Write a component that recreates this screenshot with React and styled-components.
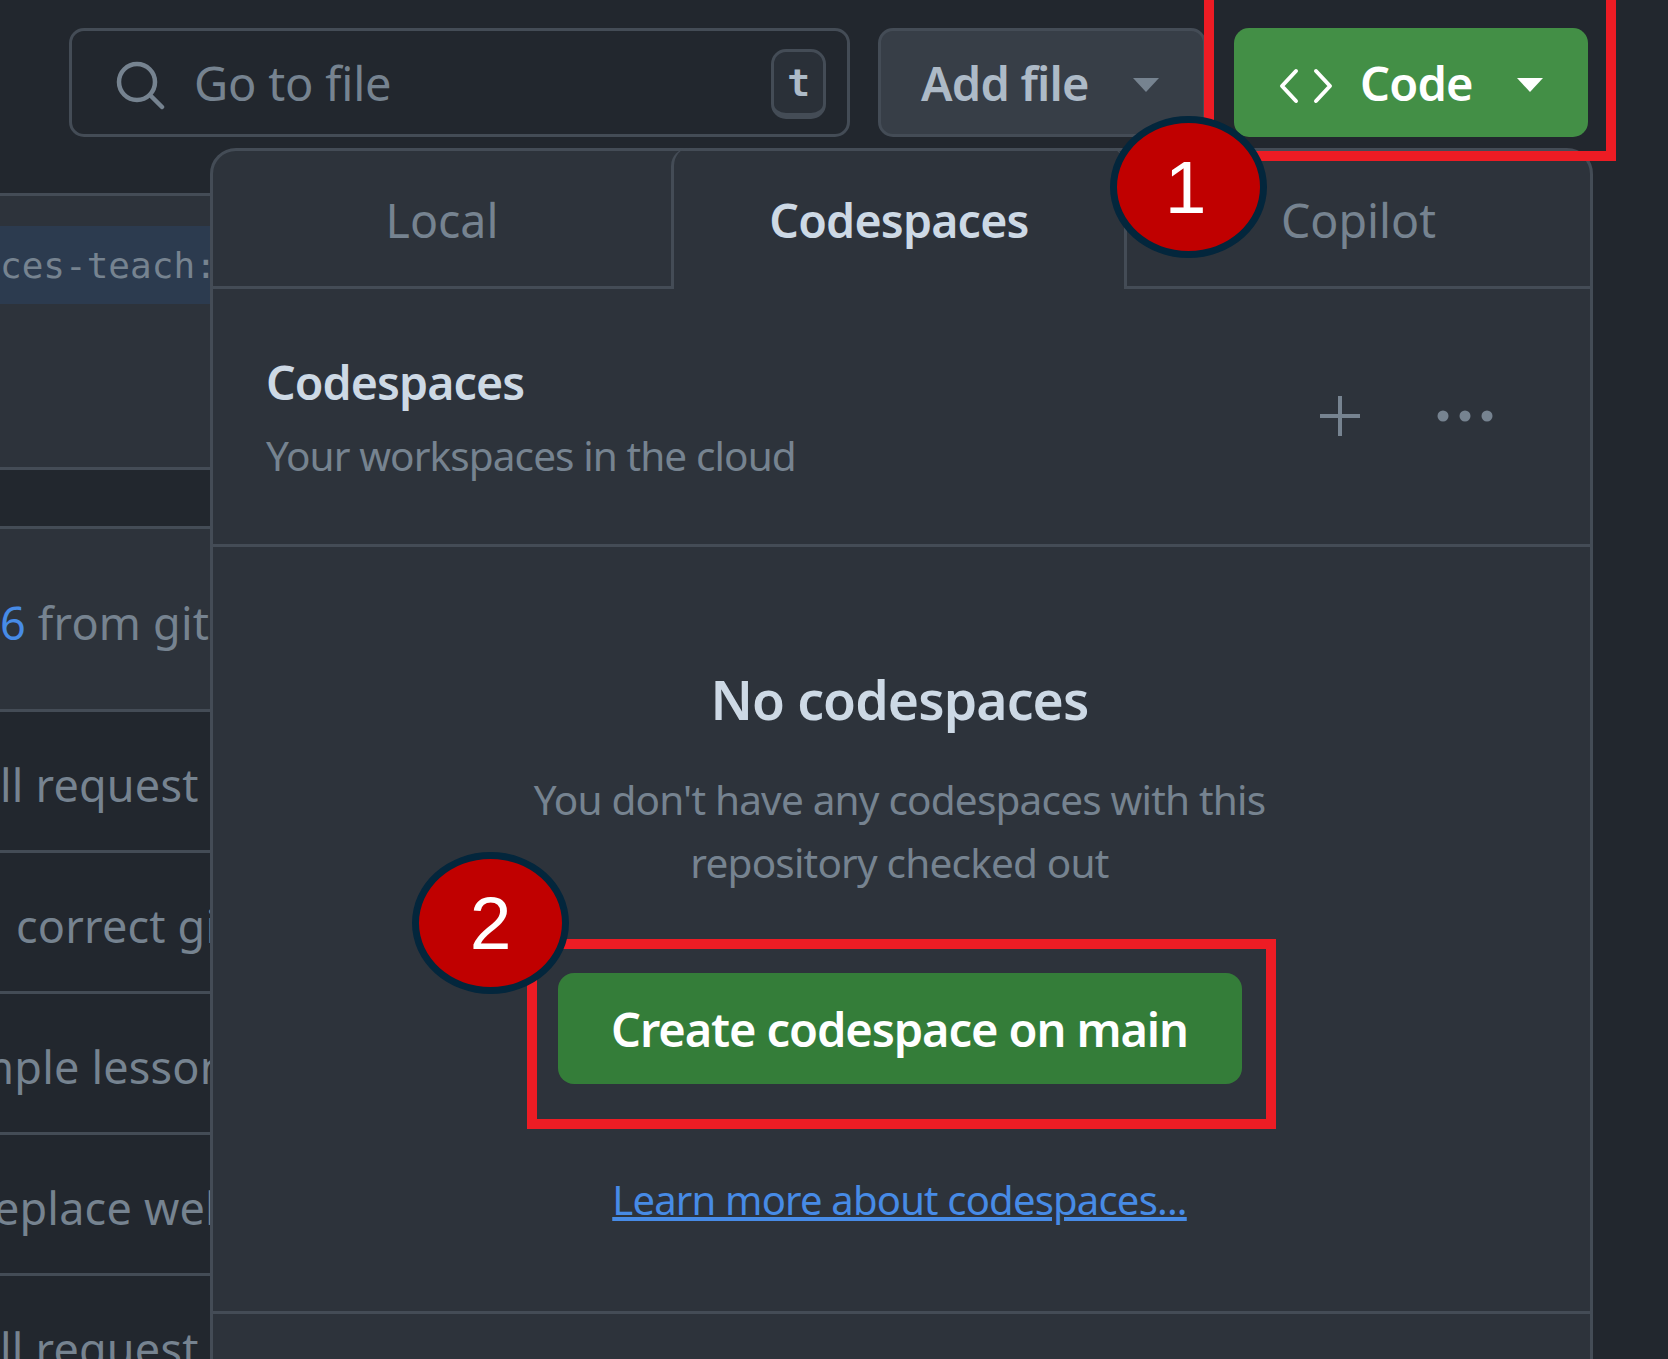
import React from 'react';
import styled, { createGlobalStyle } from 'styled-components';

const sans = `'Noto Sans', 'Open Sans', sans-serif`;
const mono = `'DejaVu Sans Mono', 'Liberation Mono', monospace`;
const line = '#444c56';

const GlobalStyle = createGlobalStyle`
	html, body {
		margin: 0;
		padding: 0;
		background: #22272e;
	}
`;

const Page = styled.div`
	position: relative;
	width: 1668px;
	height: 1359px;
	overflow: hidden;
	background: #22272e;
	font-family: ${sans};
`;

const Toolbar = styled.div`
	display: flex;
	height: 109px;
	padding: 28px 0 0 69px;
	gap: 28px;
`;

const SearchBox = styled.div`
	display: flex;
	align-items: center;
	box-sizing: border-box;
	width: 781px;
	padding: 0 21px 0 44px;
	gap: 29px;
	border: 3px solid ${line};
	border-radius: 15px;
	font-size: 47px;
	letter-spacing: -0.2px;
	color: #768390;
`;

const SearchIcon = styled.svg`
	width: 49px;
	height: 49px;
	margin-top: 5px;
	fill: none;
	stroke: #768390;
	stroke-width: 4.5;
	stroke-linecap: round;
`;

const SearchText = styled.span`
	flex: 1;
`;

const KeyHint = styled.span`
	display: flex;
	align-items: center;
	justify-content: center;
	box-sizing: border-box;
	width: 55px;
	height: 70px;
	margin-top: 3px;
	border: 3px solid ${line};
	border-bottom-width: 6px;
	border-radius: 15px;
	background: #2a3038;
	color: #adbac7;
	font-family: ${mono};
	font-size: 38px;
	font-weight: 700;
`;

const ActionButton = styled.div`
	display: flex;
	align-items: center;
	box-sizing: border-box;
	width: ${(props) => props.$width}px;
	padding-left: ${(props) => props.$pad}px;
	border-radius: 15px;
	background: ${(props) => (props.$primary ? '#438f46' : '#373e47')};
	border: ${(props) => (props.$primary ? 'none' : `3px solid ${line}`)};
	color: ${(props) => (props.$primary ? '#ffffff' : '#adbac7')};
	font-size: 47px;
	font-weight: 600;
	letter-spacing: -0.8px;
`;

const Caret = styled.span`
	width: 0;
	height: 0;
	margin: 4px 0 0 ${(props) => props.$gap}px;
	border-left: 13px solid transparent;
	border-right: 13px solid transparent;
	border-top: 14px solid ${(props) => props.$color};
`;

const CodeIcon = styled.svg`
	width: 54px;
	height: 36px;
	margin: 6px 27px 0 0;
	fill: none;
	stroke: #ffffff;
	stroke-width: 4;
	stroke-linecap: round;
	stroke-linejoin: round;
`;

const FileList = styled.div`
	width: 1400px;
	margin-top: 56px;
	border-top: 3px solid ${line};
`;

const FileRow = styled.div`
	box-sizing: border-box;
	display: flex;
	align-items: ${(props) => (props.$band ? 'flex-start' : 'center')};
	height: ${(props) => props.$height}px;
	padding-top: ${(props) => (props.$band ? 0 : 6)}px;
	border-bottom: 3px solid ${line};
	background: ${(props) => (props.$light ? '#2d333b' : '#22272e')};
	color: #768390;
	font-size: 45px;
	letter-spacing: 0.2px;
	white-space: nowrap;
`;

const RowText = styled.span`
	margin-left: ${(props) => props.$x}px;
`;

const CodeBand = styled.div`
	flex: 1;
	display: flex;
	align-items: center;
	height: 78px;
	margin-top: 30px;
	background: #2c3b4f;
	font-family: ${mono};
	font-size: 36px;
	letter-spacing: 0;
	color: #768390;
`;

const IssueLink = styled.span`
	color: #478be6;
`;

const Panel = styled.div`
	position: absolute;
	left: 210px;
	top: 148px;
	box-sizing: border-box;
	width: 1383px;
	height: 1300px;
	border: 3px solid ${line};
	border-radius: 26px 26px 0 0;
	background: #2d333b;
	z-index: 2;
`;

const Tabs = styled.div`
	display: grid;
	grid-template-columns: 458px 456px 1fr;
	height: 138px;
`;

const Tab = styled.div`
	display: flex;
	align-items: center;
	justify-content: center;
	box-sizing: border-box;
	padding-top: 3px;
	font-size: 46.5px;
	letter-spacing: ${(props) => (props.$active ? '-0.8px' : '0')};
	font-weight: ${(props) => (props.$active ? 600 : 400)};
	color: ${(props) => (props.$active ? '#cdd9e5' : '#768390')};
	border-bottom: ${(props) => (props.$active ? 'none' : `3px solid ${line}`)};
	border-left: ${(props) => (props.$active ? `3px solid ${line}` : 'none')};
	border-right: ${(props) => (props.$active ? `3px solid ${line}` : 'none')};
	border-radius: ${(props) => (props.$active ? '18px 18px 0 0' : '0')};
	margin-top: ${(props) => (props.$active ? '-3px' : '0')};
`;

const PanelHeader = styled.div`
	display: flex;
	align-items: center;
	justify-content: space-between;
	box-sizing: border-box;
	height: 258px;
	padding: 0 97px 0 53px;
	border-bottom: 3px solid ${line};
`;

const Title = styled.div`
	font-size: 46.5px;
	font-weight: 600;
	letter-spacing: -0.9px;
	line-height: 60px;
	color: #cdd9e5;
`;

const Subtitle = styled.div`
	margin-top: 19px;
	font-size: 40.5px;
	letter-spacing: -0.9px;
	line-height: 50px;
	color: #768390;
`;

const HeaderIcons = styled.div`
	display: flex;
	align-items: center;
	gap: 77px;
	margin-top: -2px;
`;

const EmptyState = styled.div`
	display: flex;
	flex-direction: column;
	align-items: center;
	box-sizing: border-box;
	height: 767px;
	padding: 118px 4px 0 0;
	border-bottom: 3px solid ${line};
	text-align: center;
`;

const EmptyTitle = styled.div`
	font-size: 53.5px;
	font-weight: 600;
	letter-spacing: -0.9px;
	line-height: 70px;
	color: #cdd9e5;
`;

const EmptyText = styled.div`
	margin-top: 34px;
	font-size: 40.5px;
	letter-spacing: -0.8px;
	line-height: 62.5px;
	color: #768390;
`;

const CreateButton = styled.div`
	display: flex;
	align-items: center;
	justify-content: center;
	width: 684px;
	height: 111px;
	margin-top: 79px;
	border-radius: 16px;
	background: #347d39;
	color: #ffffff;
	font-size: 47px;
	font-weight: 600;
	letter-spacing: -1.1px;
`;

const LearnLink = styled.a`
	margin-top: 88px;
	font-size: 40px;
	letter-spacing: -0.8px;
	line-height: 56px;
	color: #478be6;
	text-decoration: underline;
`;

const Outline = styled.div`
	position: absolute;
	left: ${(props) => props.$x}px;
	top: ${(props) => props.$y}px;
	width: ${(props) => props.$w}px;
	height: ${(props) => props.$h}px;
	box-sizing: border-box;
	border: 10px solid #ed1c24;
	z-index: 3;
`;

const Marker = styled.div`
	position: absolute;
	left: ${(props) => props.$x}px;
	top: ${(props) => props.$y}px;
	display: flex;
	align-items: center;
	justify-content: center;
	box-sizing: border-box;
	width: 157px;
	height: 142px;
	padding-right: ${(props) => props.$inset || 0}px;
	border: 7px solid #03263c;
	border-radius: 50%;
	background: #c00000;
	color: #ffffff;
	font-family: 'Liberation Sans', Arial, sans-serif;
	font-size: 75px;
	z-index: 4;
`;

const rows = [
	{ height: 141, x: 0, text: 'll request' },
	{ height: 141, x: 16, text: 'correct gi' },
	{ height: 141, x: -28, text: 'mple lesson' },
	{ height: 141, x: -24, text: 'replace web' },
	{ height: 141, x: 0, text: 'll request' },
];

const App = () => {
	return (
		<Page>
			<GlobalStyle />
			<Toolbar>
				<SearchBox>
					<SearchIcon viewBox='0 0 49 49'>
						<ellipse cx='21' cy='21' rx='18' ry='18' />
						<path d='M34 34 L46 46' />
					</SearchIcon>
					<SearchText>Go to file</SearchText>
					<KeyHint>t</KeyHint>
				</SearchBox>
				<ActionButton $width={328} $pad={40}>
					Add file
					<Caret $gap={44} $color='#768390' />
				</ActionButton>
				<ActionButton $primary $width={354} $pad={45}>
					<CodeIcon viewBox='0 0 54 36'>
						<path d='M17 3 L3 18 L17 33' />
						<path d='M37 3 L51 18 L37 33' />
					</CodeIcon>
					Code
					<Caret $gap={44} $color='#ffffff' />
				</ActionButton>
			</Toolbar>

			<FileList>
				<FileRow $light $band $height={274}>
					<CodeBand>ces-teach:</CodeBand>
				</FileRow>
				<FileRow $height={59} />
				<FileRow $light $height={183}>
					<IssueLink>6</IssueLink>&nbsp;from git
				</FileRow>
				{rows.map((row, i) => (
					<FileRow key={i} $height={row.height}>
						<RowText $x={row.x}>{row.text}</RowText>
					</FileRow>
				))}
			</FileList>

			<Panel>
				<Tabs>
					<Tab>Local</Tab>
					<Tab $active>Codespaces</Tab>
					<Tab>Copilot</Tab>
				</Tabs>
				<PanelHeader>
					<div>
						<Title>Codespaces</Title>
						<Subtitle>Your workspaces in the cloud</Subtitle>
					</div>
					<HeaderIcons>
						<svg width='40' height='40' viewBox='0 0 40 40' stroke='#768390' strokeWidth='4'>
							<path d='M0 20 H40 M20 0 V40' />
						</svg>
						<svg width='56' height='12' viewBox='0 0 56 12' fill='#768390'>
							<circle cx='6' cy='6' r='5.5' />
							<circle cx='28' cy='6' r='5.5' />
							<circle cx='50' cy='6' r='5.5' />
						</svg>
					</HeaderIcons>
				</PanelHeader>
				<EmptyState>
					<EmptyTitle>No codespaces</EmptyTitle>
					<EmptyText>
						You don't have any codespaces with this
						<br />
						repository checked out
					</EmptyText>
					<CreateButton>Create codespace on main</CreateButton>
					<LearnLink>Learn more about codespaces...</LearnLink>
				</EmptyState>
			</Panel>

			<Outline $x={1204} $y={-10} $w={412} $h={171} />
			<Outline $x={527} $y={939} $w={749} $h={190} />
			<Marker $x={1110} $y={116} $inset={6}>1</Marker>
			<Marker $x={412} $y={852}>2</Marker>
		</Page>
	);
};

export default App;
